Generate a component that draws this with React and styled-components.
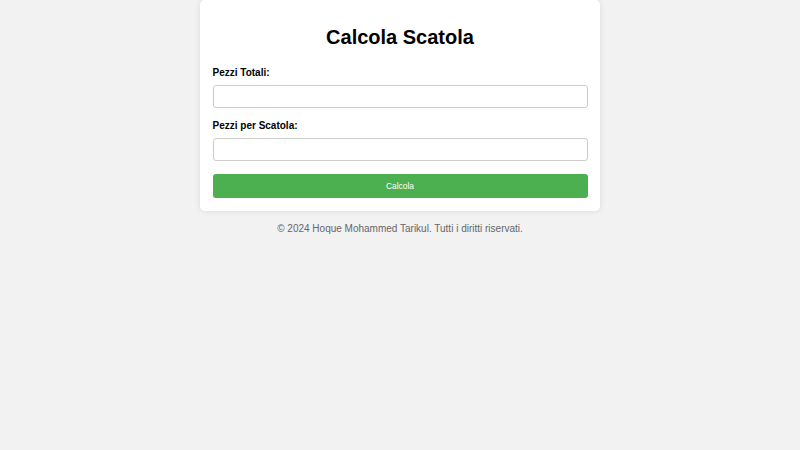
import React from 'react'
import styled, { createGlobalStyle } from 'styled-components'

const GlobalStyle = createGlobalStyle`
  * { box-sizing: border-box; }
  body {
    margin: 0;
    background: #f2f2f2;
    font-family: "Liberation Sans", Arial, sans-serif;
  }
`

const Page = styled.div`
  display: flex;
  flex-direction: column;
  align-items: center;
`

const Card = styled.div`
  width: 400px;
  background: #fff;
  border-radius: 5px;
  padding: 12.5px;
  box-shadow: 0 0 6px rgba(0, 0, 0, 0.1);
`

const Title = styled.h1`
  margin: 13.4px 0 18px;
  font-size: 20px;
  font-weight: 700;
  text-align: center;
  color: #000;
`

const Label = styled.label`
  display: block;
  font-size: 10px;
  font-weight: 700;
  color: #000;
  margin-bottom: 7px;
`

const Input = styled.input`
  display: block;
  width: 100%;
  height: 23px;
  border: 1px solid #ccc;
  border-radius: 3px;
  margin-bottom: ${({ $last }) => ($last ? '0' : '12.5px')};
  font-size: 10px;
  padding: 0 6px;
`

const Button = styled.button`
  display: block;
  width: 100%;
  height: 24px;
  border: none;
  border-radius: 3px;
  background: #4caf50;
  color: #fff;
  font-family: "Liberation Sans", Arial, sans-serif;
  font-size: 8.4px;
  margin-top: 13px;
  cursor: pointer;
`

const Footer = styled.footer`
  margin-top: 12px;
  font-size: 10px;
  color: #666;
  text-align: center;
`

export default function App() {
  return (
    <Page>
      <GlobalStyle />
      <Card>
        <Title>Calcola Scatola</Title>
        <Label htmlFor="totali">Pezzi Totali:</Label>
        <Input id="totali" type="number" />
        <Label htmlFor="perScatola">Pezzi per Scatola:</Label>
        <Input id="perScatola" type="number" $last />
        <Button>Calcola</Button>
      </Card>
      <Footer>© 2024 Hoque Mohammed Tarikul. Tutti i diritti riservati.</Footer>
    </Page>
  )
}
